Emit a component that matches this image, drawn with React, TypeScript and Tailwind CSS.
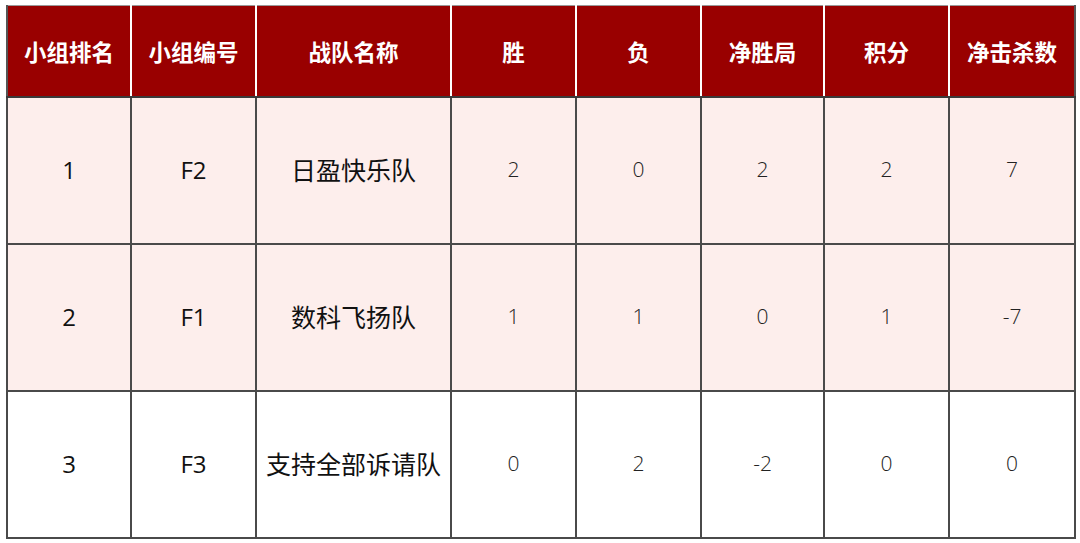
const headers = ['小组排名', '小组编号', '战队名称', '胜', '负', '净胜局', '积分', '净击杀数'];

const rows = [
  { rank: '1', code: 'F2', team: '日盈快乐队', stats: ['2', '0', '2', '2', '7'], pink: true },
  { rank: '2', code: 'F1', team: '数科飞扬队', stats: ['1', '1', '0', '1', '-7'], pink: true },
  { rank: '3', code: 'F3', team: '支持全部诉请队', stats: ['0', '2', '-2', '0', '0'], pink: false },
];

export default function App() {
  return (
    <div className="w-[1080px] h-[543px] bg-white pt-[5px] pl-[6px] font-['Open_Sans','Noto_Sans_CJK_SC',sans-serif]">
      <table className="table-fixed border-collapse">
        <colgroup>
          <col className="w-[124px]" />
          <col className="w-[125px]" />
          <col className="w-[195px]" />
          <col className="w-[125px]" />
          <col className="w-[125px]" />
          <col className="w-[123px]" />
          <col className="w-[125px]" />
          <col className="w-[126px]" />
        </colgroup>
        <thead>
          <tr className="h-[91px]">
            {headers.map((h) => (
              <th
                key={h}
                className="bg-[#990000] text-white font-bold text-[22.5px] leading-none border-x-2 border-x-white border-t border-t-[#9a9a9a] border-b-2 border-b-[#3a3a3a] first:border-l-[#555] last:border-r-[#555] font-['Noto_Sans_CJK_SC',sans-serif]"
              >
                {h}
              </th>
            ))}
          </tr>
        </thead>
        <tbody>
          {rows.map((r) => (
            <tr key={r.rank} className={`h-[147px] ${r.pink ? 'bg-[#fdeeec]' : 'bg-white'}`}>
              <td className="border-2 border-[#4a4a4a] text-center text-[24px] text-[#111]">{r.rank}</td>
              <td className="border-2 border-[#4a4a4a] text-center text-[24px] text-[#111]">{r.code}</td>
              <td className="border-2 border-[#4a4a4a] text-center text-[25px] text-[#111] whitespace-nowrap font-['Noto_Sans_CJK_SC',sans-serif]">{r.team}</td>
              {r.stats.map((s, i) => (
                <td key={i} className="border-2 border-[#4a4a4a] text-center text-[21px] font-light text-[#222]">
                  {s}
                </td>
              ))}
            </tr>
          ))}
        </tbody>
      </table>
    </div>
  );
}
